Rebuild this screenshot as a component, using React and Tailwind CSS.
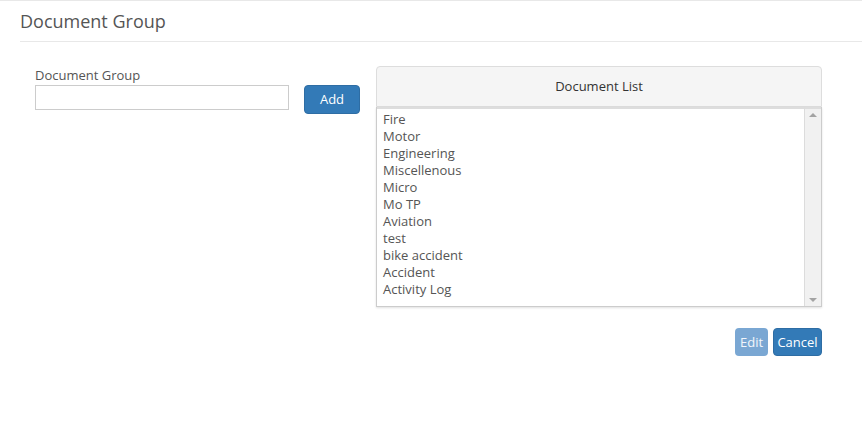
import React from "react";

const items = [
  "Fire",
  "Motor",
  "Engineering",
  "Miscellenous",
  "Micro",
  "Mo TP",
  "Aviation",
  "test",
  "bike accident",
  "Accident",
  "Activity Log",
];

const App = () => {
  return (
    <div className="min-h-screen bg-white border-t border-[#e8e8e8] font-['Open_Sans',_'Liberation_Sans',_sans-serif] text-[#555]">
      {/* Page title */}
      <div className="ml-[20px] border-b border-[#e8e8e8] h-[41px] pt-[8px]">
        <h2 className="text-[18px] leading-[24px] text-[#555]">Document Group</h2>
      </div>

      <div className="flex pl-[35px] pt-[24px]">
        {/* Form column */}
        <div className="w-[254px]">
          <label className="block text-[13px] leading-[19px] text-[#555]">
            Document Group
          </label>
          <input
            type="text"
            className="block w-[254px] h-[25px] border border-[#ccc] bg-white outline-none px-2 text-[13px]"
          />
        </div>
        <div className="pt-[19px] ml-[15px]">
          <button className="w-[56px] h-[29px] rounded-[4px] bg-[#337ab7] border border-[#2e6da4] text-white text-[13px] leading-none">
            Add
          </button>
        </div>

        {/* Document list panel */}
        <div className="ml-[16px] w-[446px]">
          <div className="h-[41px] bg-[#f5f5f5] border border-[#ddd] rounded-t-[4px] flex items-center justify-center text-[13px] text-[#333]">
            Document List
          </div>
          <div className="flex h-[200px] border border-t-0 border-[#ccc] shadow-[0_1px_2px_rgba(0,0,0,0.12)] bg-white">
            <div className="flex-1 pt-[2px] pl-[6px] border-t-2 border-[#ddd]">
              {items.map((it) => (
                <div key={it} className="text-[13px] leading-[17px] text-[#555]">
                  {it}
                </div>
              ))}
            </div>
            <div className="w-[17px] bg-[#f1f1f1] border-l border-[#dcdcdc] border-t-2 border-t-[#ddd] flex flex-col justify-between items-center py-[4px]">
              <div className="w-0 h-0 border-l-[4px] border-r-[4px] border-b-[4px] border-l-transparent border-r-transparent border-b-[#a3a3a3]" />
              <div className="w-0 h-0 border-l-[4px] border-r-[4px] border-t-[4px] border-l-transparent border-r-transparent border-t-[#a3a3a3]" />
            </div>
          </div>
        </div>
      </div>

      {/* Action buttons */}
      <div className="flex justify-end gap-[5px] pr-[40px] pt-[21px]">
        <button className="w-[33px] h-[28px] rounded-[4px] bg-[#7aa7d3] text-white/90 text-[13px] leading-none">
          Edit
        </button>
        <button className="w-[49px] h-[28px] rounded-[4px] bg-[#337ab7] border border-[#2e6da4] text-white text-[13px] leading-none">
          Cancel
        </button>
      </div>
    </div>
  );
};

export default App;
